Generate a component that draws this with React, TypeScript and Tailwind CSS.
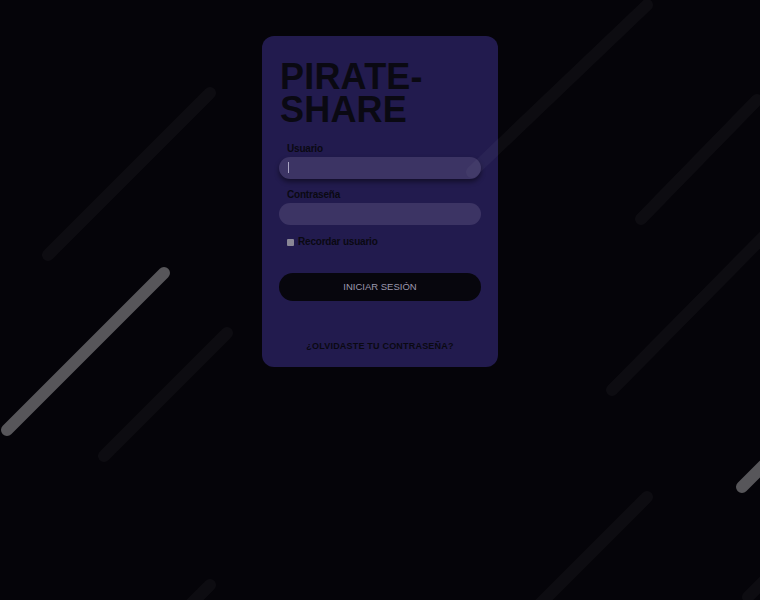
import { useState } from 'react';

// decorative streaks in the background (x1, y1, x2, y2, bright?)
const streaks: [number, number, number, number, boolean][] = [
    [48, 255, 210, 93, false],
    [7, 430, 164, 273, true],
    [104, 456, 227, 333, false],
    [210, 585, 180, 615, false],
    [647, 5, 472, 172, false],
    [757, 100, 641, 219, false],
    [775, 225, 612, 390, false],
    [742, 487, 775, 454, true],
    [647, 497, 530, 614, false],
    [748, 597, 775, 570, false],
];

const App = () => {
    const [usuario, setUsuario] = useState('');
    const [password, setPassword] = useState('');
    const [recordar, setRecordar] = useState(false);

    return (
        <div className="relative min-h-[600px] w-full overflow-hidden bg-[#050409] font-['Liberation_Sans',Arial,sans-serif]">
            <div className="flex justify-center pt-9">
                {/* Login card */}
                <div className="w-[236px] h-[331px] rounded-xl bg-[#221b4e] px-[17px] pt-6 flex flex-col">
                    <h1 className="pl-px text-[36px] font-bold leading-[33px] tracking-[0.2px] text-[#0a0912]">
                        PIRATE-
                        <br />
                        SHARE
                    </h1>

                    <form className="mt-[17px] flex flex-col">
                        <label className="pl-2 text-[10px] font-bold leading-[12px] tracking-[-0.2px] text-[#0a0912]">Usuario</label>
                        <div className="relative mt-[2px]">
                            <input
                                type="text"
                                value={usuario}
                                onChange={(e) => setUsuario(e.target.value)}
                                className="block h-[22px] w-full rounded-full bg-[#3c3464] px-2 text-[11px] text-[#c8c4dc] outline-none shadow-[0_3px_5px_rgba(0,0,0,0.45)]"
                            />
                            {usuario === '' && (
                                <span className="absolute left-[9px] top-[5px] h-[11px] w-px bg-[#a9a5c2]" />
                            )}
                        </div>

                        <label className="mt-[10px] pl-2 text-[10px] font-bold leading-[12px] tracking-[-0.2px] text-[#0a0912]">Contraseña</label>
                        <input
                            type="password"
                            value={password}
                            onChange={(e) => setPassword(e.target.value)}
                            className="mt-[2px] block h-[22px] w-full rounded-full bg-[#3c3464] px-2 text-[11px] text-[#c8c4dc] outline-none"
                        />

                        <label className="mt-[11px] flex h-[12px] items-center gap-[4px] pl-2 text-[10px] font-bold leading-[12px] tracking-[-0.2px] text-[#0a0912]">
                            <input
                                type="checkbox"
                                checked={recordar}
                                onChange={() => setRecordar(!recordar)}
                                className="h-[7px] w-[7px] appearance-none rounded-[1px] bg-[#8a8796]"
                            />
                            Recordar usuario
                        </label>

                        <button
                            type="submit"
                            className="mt-[25px] block h-[28px] w-full rounded-full bg-[#07060d] text-[9.5px] text-[#9d99ad]"
                        >
                            INICIAR SESIÓN
                        </button>
                    </form>

                    <a className="mt-[39px] text-center text-[9px] font-bold leading-[12px] tracking-[0.2px] text-[#0a0912]">
                        ¿OLVIDASTE TU CONTRASEÑA?
                    </a>
                </div>
            </div>

            {/* Streaks drawn over everything, very faint */}
            <svg className="pointer-events-none absolute inset-0" width="760" height="600" viewBox="0 0 760 600">
                {streaks.map(([x1, y1, x2, y2, bright], i) => (
                    <line
                        key={i}
                        x1={x1}
                        y1={y1}
                        x2={x2}
                        y2={y2}
                        stroke="#ffffff"
                        strokeOpacity={bright ? 0.33 : 0.035}
                        strokeWidth={12}
                        strokeLinecap="round"
                    />
                ))}
            </svg>
        </div>
    );
};

export default App;
